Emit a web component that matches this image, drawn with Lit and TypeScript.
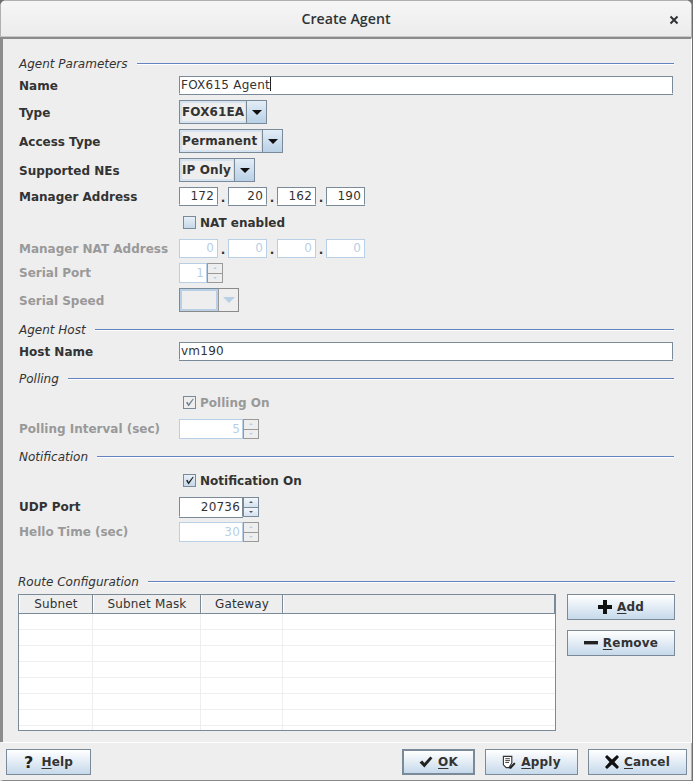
import { LitElement, html, css, svg } from "lit";
import { customElement } from "lit/decorators.js";

const plus = svg`<path d="M5 0h4v5h5v4H9v5H5V9H0V5h5z" fill="#111"/>`;
const minus = svg`<rect x="0" y="5" width="14" height="3.4" fill="#222"/>`;
const okTick = svg`<path d="M0.5 6.5 L3 4.5 L5 7 L10.5 1 L12.5 2.5 L5 11 Z" fill="#222"/>`;
const boxTick = svg`<path d="M2 5.5 L3.5 4.8 L4.6 7 L9 1.5 L9.6 2.2 L4.6 9.6 Z" fill="currentColor"/>`;
const cross = svg`<path d="M2 0 L7 4.5 L12 0 L14 2 L9.5 7 L14 12 L12 14 L7 9.5 L2 14 L0 12 L4.5 7 L0 2 Z" fill="#111"/>`;
const doc = svg`<path d="M1.5 1.5h9v7l-3 5h-3l-3-3z" fill="#fff" stroke="#333" stroke-width="1.2"/><path d="M3.5 4h5M3.5 6h5M3.5 8h4" stroke="#333" stroke-width="1"/><path d="M7 14l6-6 1.5 1.5-5 5.5z" fill="#222"/>`;

@customElement("app-root")
export class AppRoot extends LitElement {
  static styles = css`
    :host { display: block; width: 693px; height: 781px; background: #6f6f6f; overflow: hidden;
      font: 12px "DejaVu Sans", sans-serif; color: #333; }
    * { box-sizing: border-box; }
    .win { width: 692px; height: 781px; display: flex; flex-direction: column; background: #eee;
      border-radius: 7px 7px 0 0; overflow: hidden; box-shadow: inset 0 0 0 1px #b0b0b0; }
    .title { height: 37px; flex: none; position: relative; display: flex; align-items: center; justify-content: center;
      background: linear-gradient(#f6f6f6, #ececec); border: 1px solid #b0b0b0; border-bottom: 1px solid #c8c8c8;
      font: 600 14.2px "Open Sans", sans-serif; color: #2e3436; }
    .close { position: absolute; right: 12px; top: 14px; width: 10px; height: 10px; }
    .main { flex: 1; display: flex; flex-direction: column; padding: 15px 17px 0 16px; min-height: 0;
      border-top: 2px solid #8c8c8c; border-left: 3px solid #8c8c8c; border-right: 1px solid #fff;
      box-shadow: inset 1px 0 0 #eee; }
    .row { display: flex; align-items: center; flex: none; }
    .lab { width: 160px; flex: none; font-weight: 700; color: #333; padding-top: 1px; white-space: nowrap; }
    .h20 .lab { padding-top: 0; padding-bottom: 1px; }
    .off .lab { color: #999; }
    .h18 { height: 18px; } .h19 { height: 19px; } .h20 { height: 20px; } .h24 { height: 24px; }
    .t4 { margin-top: 4px; } .t5 { margin-top: 5px; } .t6 { margin-top: 6px; } .t7 { margin-top: 7px; }
    .t8 { margin-top: 8px; } .t9 { margin-top: 9px; } .t30 { margin-top: 30px; }
    .sec { display: flex; align-items: center; height: 18px; flex: none; font-style: italic; font-size: 12px; color: #333; }
    .sec span { padding-top: 2px; }
    .sec i { flex: 1; height: 2px; margin-left: 9px; border-top: 1px solid #6382bf; border-bottom: 1px solid #fff; margin-top: 1px; }
    .sec.route { margin-left: -1px; margin-right: -1px; }
    .tf { height: 100%; background: #fff; border: 1px solid #7a8a99; border-bottom-color: #fff; box-shadow: 0 1px 0 #7a8a99;
      padding: 0 2px; line-height: 17px; font-size: 12px; color: #333; letter-spacing: .2px; white-space: nowrap; }
    .tf.full { flex: 1; margin-right: 1px; padding-left: 1px; letter-spacing: .25px; }
    .caret { display: inline-block; width: 1px; height: 14px; background: #222; vertical-align: -2px; }
    .combo { height: 24px; display: flex; border: 1px solid #7a8a99; background: #eee; }
    .w88 { width: 88px; } .w104 { width: 104px; } .w76 { width: 76px; }
    .combo .val { flex: 1; border: 2px solid #d5e3f1; border-right-width: 1px; padding: 0 0 0 0; font-weight: 700; display: flex; align-items: center; color: #333; letter-spacing: .1px; white-space: nowrap; overflow: hidden; }
    .combo .btn { width: 20px; flex: none; border-left: 1px solid #7a8a99; background: linear-gradient(#e3edf6, #b9d0e6); display: flex; align-items: center; justify-content: center; }
    .arrow { width: 0; height: 0; border: 5px solid transparent; border-top: 5px solid #111; border-bottom: 0; }
    .combo.dis { width: 60px; border-color: #8a8a8a; }
    .combo.dis .val { border: 2px solid #b8cfe5; box-shadow: -1px -1px 0 #7a8a99; }
    .combo.dis .btn { background: #eee; border-left: 1px solid #999; }
    .combo.dis .arrow { border-top-color: #b8cfe5; border-width: 6px; border-bottom: 0; }
    .ip { display: flex; align-items: center; height: 100%; }
    .ip .tf { width: 39px; text-align: right; padding-right: 3px; }
    .ip .dot { width: 10px; text-align: center; font-weight: 700; font-size: 12px; padding-top: 3px; }
    .off .tf { border: 1px solid #b8cfe5; color: #b8cfe5; box-shadow: none; }
    .spin { display: flex; height: 100%; width: 80px; }
    .spin .tf { flex: 1; text-align: right; padding-right: 2px; line-height: 18px; }
    .spin.serial { width: 44px; }
    .spin .bs { width: 16px; flex: none; display: flex; flex-direction: column; border: 1px solid #7a8a99; }
    .spin .bs b { flex: 1; display: flex; align-items: center; justify-content: center; background: linear-gradient(#f3f6fa, #d4e2ef); }
    .spin .bs b + b { border-top: 1px solid #7a8a99; }
    .up { width: 0; height: 0; border: 2px solid transparent; border-bottom: 2px solid #555; border-top: 0; }
    .dn { width: 0; height: 0; border: 2px solid transparent; border-top: 2px solid #555; border-bottom: 0; }
    .off .spin .bs { border-color: #999; }
    .off .spin .bs b { background: #eee; }
    .off .spin .bs b + b { border-top-color: #999; }
    .off .up { border-bottom-color: #b8cfe5; } .off .dn { border-top-color: #b8cfe5; }
    .chk { margin-left: 164px; display: flex; align-items: center; gap: 4px; font-weight: 700; color: #333; }
    .chk.off { color: #999; }
    .box { width: 13px; height: 13px; border: 1px solid #7a8a99; background: linear-gradient(#e8f0f7, #c4d8ea); display: flex; color: #222; }
    .chk.off .box { background: #eee; color: #6d7e8e; }
    .box svg { width: 11px; height: 11px; }
    .route-body { display: flex; gap: 11px; margin-top: 4px; margin-left: -1px; flex: none; margin-right: -2px; }
    .table { width: 538px; height: 137px; border: 1px solid #7a8a99; background: #fff; display: flex; flex-direction: column; overflow: hidden; }
    .thead { display: grid; grid-template-columns: 74px 108px 82px 1fr; height: 19px; background: #eee; border-bottom: 1px solid #7a8a99; flex: none; }
    .thead span { text-align: center; border-left: 1px solid #fff; border-right: 1px solid #7a8a99; color: #333; font-size: 12px; line-height: 18px; letter-spacing: .15px; }
    .tbody { flex: 1; overflow: hidden; }
    .tr { display: grid; grid-template-columns: 74px 108px 82px 1fr; height: 16px; border-bottom: 1px solid #eee; }
    .tr span { border-right: 1px solid #eee; }
    .tr span:last-child { border-right: 0; }
    .side { width: 108px; display: flex; flex-direction: column; gap: 10px; }
    .b { height: 26px; display: flex; align-items: center; justify-content: center; gap: 5px; font-weight: 700; color: #333;
      border: 1px solid #7a8a99; background: linear-gradient(#fff, #c6d9eb); letter-spacing: .2px; }
    .b u { text-underline-offset: 2px; }
    .b svg { width: 14px; height: 14px; flex: none; }
    .b.def { border: 2px solid #7a8a99; }
    .foot { height: 39px; flex: none; border-top: 1px solid #fff; border-left: 3px solid #eee; border-bottom: 1px solid #888; display: flex; justify-content: space-between; padding: 6px 5px 0 3px; }
    .w85 { width: 85px; } .w73 { width: 73px; } .w93 { width: 93px; } .w99 { width: 99px; }
    .rt { display: flex; gap: 10px; }
    .q { font-size: 16px; color: #222; margin-right: 3px; font-weight: 700; }
  `;

  private ip(parts: string[], off = false) {
    return html`<div class="ip ${off ? "off" : ""}">
      ${parts.map((p, i) => html`${i ? html`<span class="dot">.</span>` : ""}<div class="tf">${p}</div>`)}
    </div>`;
  }

  private spin(v: string, cls = "") {
    return html`<div class="spin ${cls}"><div class="tf">${v}</div><div class="bs"><b><span class="up"></span></b><b><span class="dn"></span></b></div></div>`;
  }

  private combo(v: string, w: string) {
    return html`<div class="combo ${w}"><div class="val">${v}</div><div class="btn"><span class="arrow"></span></div></div>`;
  }

  private sec(t: string, cls = "") {
    return html`<div class="sec ${cls}"><span>${t}</span><i></i></div>`;
  }

  render() {
    return html`<div class="win">
      <div class="title">Create Agent
        <svg class="close" viewBox="0 0 10 10"><path d="M1.5 1.5 8.5 8.5M8.5 1.5 1.5 8.5" stroke="#2e3436" stroke-width="2"/></svg>
      </div>
      <div class="main">
        ${this.sec("Agent Parameters")}
        <div class="row h18 t4"><span class="lab">Name</span><div class="tf full">FOX615 Agent<span class="caret"></span></div></div>
        <div class="row h24 t6"><span class="lab">Type</span>${this.combo("FOX61EA", "w88")}</div>
        <div class="row h24 t5"><span class="lab">Access Type</span>${this.combo("Permanent", "w104")}</div>
        <div class="row h24 t5"><span class="lab">Supported NEs</span>${this.combo("IP Only", "w76")}</div>
        <div class="row h18 t5"><span class="lab">Manager Address</span>${this.ip(["172", "20", "162", "190"])}</div>
        <div class="row h19 t8"><div class="chk"><span class="box"></span>NAT enabled</div></div>
        <div class="row h19 t7 off"><span class="lab">Manager NAT Address</span>${this.ip(["0", "0", "0", "0"], true)}</div>
        <div class="row h20 t5 off"><span class="lab">Serial Port</span>${this.spin("1", "serial")}</div>
        <div class="row h24 t5 off"><span class="lab">Serial Speed</span><div class="combo dis"><div class="val"></div><div class="btn"><span class="arrow"></span></div></div></div>
        <div class="t8">${this.sec("Agent Host")}</div>
        <div class="row h18 t4"><span class="lab">Host Name</span><div class="tf full">vm190</div></div>
        <div class="t9">${this.sec("Polling")}</div>
        <div class="row h19 t6"><div class="chk off"><span class="box"><svg viewBox="0 0 11 11">${boxTick}</svg></span>Polling On</div></div>
        <div class="row h20 t7 off"><span class="lab">Polling Interval (sec)</span>${this.spin("5")}</div>
        <div class="t8">${this.sec("Notification")}</div>
        <div class="row h19 t6"><div class="chk"><span class="box"><svg viewBox="0 0 11 11">${boxTick}</svg></span>Notification On</div></div>
        <div class="row h20 t7"><span class="lab">UDP Port</span>${this.spin("20736")}</div>
        <div class="row h20 t5 off"><span class="lab">Hello Time (sec)</span>${this.spin("30")}</div>
        <div class="t30">${this.sec("Route Configuration", "route")}</div>
        <div class="route-body">
          <div class="table">
            <div class="thead"><span>Subnet</span><span>Subnet Mask</span><span>Gateway</span><span></span></div>
            <div class="tbody">
              ${Array.from({ length: 8 }, () => html`<div class="tr"><span></span><span></span><span></span><span></span></div>`)}
            </div>
          </div>
          <div class="side">
            <div class="b"><svg viewBox="0 0 14 14">${plus}</svg><span><u>A</u>dd</span></div>
            <div class="b"><svg viewBox="0 0 14 14">${minus}</svg><span><u>R</u>emove</span></div>
          </div>
        </div>
      </div>
      <div class="foot">
        <div class="b w85"><span class="q">?</span><span><u>H</u>elp</span></div>
        <div class="rt">
          <div class="b def w73"><svg viewBox="0 0 13 12">${okTick}</svg><span><u>O</u>K</span></div>
          <div class="b w93"><svg viewBox="0 0 15 15">${doc}</svg><span><u>A</u>pply</span></div>
          <div class="b w99"><svg viewBox="0 0 14 14">${cross}</svg><span><u>C</u>ancel</span></div>
        </div>
      </div>
    </div>`;
  }
}
